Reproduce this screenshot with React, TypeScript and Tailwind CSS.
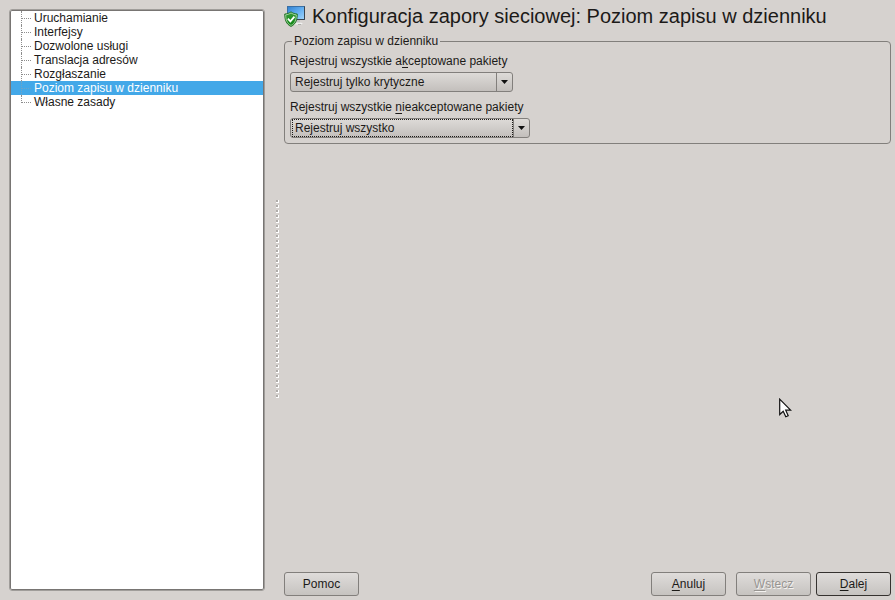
import { useState, type ReactNode } from "react";
import clsx from "clsx";

const SECTIONS = [
  "Uruchamianie",
  "Interfejsy",
  "Dozwolone usługi",
  "Translacja adresów",
  "Rozgłaszanie",
  "Poziom zapisu w dzienniku",
  "Własne zasady",
];

const LOG_LEVELS = ["Rejestruj wszystko", "Rejestruj tylko krytyczne", "Nie rejestruj niczego"];

/** Underlined accelerator letter. */
function Key({ children }: { children: ReactNode }) {
  return <span className="underline decoration-1 underline-offset-2">{children}</span>;
}

function FirewallIcon() {
  return (
    <svg width="22" height="22" viewBox="0 0 22 22" className="shrink-0" aria-hidden="true">
      <defs>
        <linearGradient id="screen" x1="0" y1="0" x2="1" y2="1">
          <stop offset="0" stopColor="#2f7fd0" />
          <stop offset="0.5" stopColor="#62aef0" />
          <stop offset="1" stopColor="#a4d6fb" />
        </linearGradient>
        <linearGradient id="shield" x1="0" y1="0" x2="0" y2="1">
          <stop offset="0" stopColor="#3a9c3a" />
          <stop offset="1" stopColor="#0b8410" />
        </linearGradient>
      </defs>
      <path d="M11 15h5v3h-5z" fill="#c4c4c4" />
      <ellipse cx="14" cy="18.500" rx="4.500" ry="1" fill="#f1f1f1" />
      <path d="M14 19.500h3" stroke="#a5a3a1" strokeWidth="0.800" />
      <rect x="3.500" y="1.500" width="17" height="13" fill="url(#screen)" stroke="#3b6fa3" />
      <path d="M20.500 1.500v13H9" fill="none" stroke="#39444f" />
      <path
        d="M7 6.800c1.800 1.400 3.900 1.900 6.300 2.200 0 5.800-1.300 10-6.300 12.500C2 19 .7 14.800.7 9c2.400-.3 4.500-.8 6.300-2.200z"
        fill="url(#shield)"
        stroke="#1f6b22"
        strokeWidth="0.800"
      />
      <path
        d="M7 8c1.600 1.100 3.300 1.600 5.300 1.900-.1 5-1.200 8.300-5.300 10.500-4.100-2.200-5.200-5.500-5.300-10.500C3.700 9.600 5.400 9.100 7 8z"
        fill="none"
        stroke="#b8dcb6"
        strokeWidth="0.800"
      />
      <path d="M3.900 13.700l2.500 2.700 4-4.700" fill="none" stroke="#fff" strokeWidth="1.800" />
    </svg>
  );
}

type SelectFieldProps = {
  id: string;
  label: ReactNode;
  initial: string;
  autoFocus?: boolean;
  className?: string;
};

function SelectField({ id, label, initial, autoFocus, className }: SelectFieldProps) {
  const [value, setValue] = useState(initial);
  return (
    <div className={clsx("flex flex-col", className)}>
      <label htmlFor={id} className="mb-[3px] h-4 whitespace-nowrap leading-4">
        {label}
      </label>
      <div className="relative grid h-5 rounded-[3px] border border-[#827f7c] bg-linear-to-b from-[#dedbd8] to-[#c3bfbc]">
        <select
          id={id}
          value={value}
          autoFocus={autoFocus}
          onChange={(e) => setValue(e.target.value)}
          className="peer w-full appearance-none bg-transparent pr-4 pl-1 leading-4 outline-none"
        >
          {LOG_LEVELS.map((level) => (
            <option key={level}>{level}</option>
          ))}
        </select>
        <span className="pointer-events-none absolute inset-y-0 right-4 left-px hidden border border-dotted border-[#1c1a18] peer-focus:block" />
        <span className="pointer-events-none absolute inset-y-0 right-0 flex w-4 items-center justify-center border-l border-[#827f7c]">
          <svg width="7" height="4" viewBox="0 0 7 4" aria-hidden="true">
            <path d="M0 0h7L3.500 4z" fill="#111" />
          </svg>
        </span>
      </div>
    </div>
  );
}

function PushButton({
  children,
  isDefault,
  disabled,
}: {
  children: ReactNode;
  isDefault?: boolean;
  disabled?: boolean;
}) {
  return (
    <button
      type="button"
      disabled={disabled}
      className={clsx(
        "h-6 w-[75px] rounded-[3px] border bg-linear-to-b from-[#dfdcda] to-[#c6c3c0] leading-4",
        isDefault ? "border-[#35322f]" : "border-[#827f7c]",
        disabled && "text-[#989592] [text-shadow:1px_1px_0_#f4f2f0]",
      )}
    >
      {children}
    </button>
  );
}

function SectionTree() {
  const [selected, setSelected] = useState(5);
  return (
    <nav className="w-64 shrink-0 rounded-[3px] border border-[#a09d9a] bg-white p-px shadow-[inset_0_0_0_1px_#787573]">
      <ul>
        {SECTIONS.map((name, i) => {
          const isSelected = i === selected;
          const isLast = i === SECTIONS.length - 1;
          const line = isSelected ? "border-[#6fa3c6]" : "border-[#8d8d8d]";
          return (
            <li key={name}>
              <button
                type="button"
                onClick={() => setSelected(i)}
                aria-current={isSelected}
                className={clsx(
                  "flex h-3.5 w-full items-start pl-2.5 leading-3.5",
                  isSelected && "bg-[#43a8e8] text-white",
                )}
              >
                <span
                  className={clsx(
                    "mr-[3px] w-2.5 border-l border-dotted",
                    line,
                    isLast ? "h-2" : "h-3.5",
                  )}
                >
                  <span className={clsx("block h-2 border-b border-dotted", line)} />
                </span>
                {name}
              </button>
            </li>
          );
        })}
      </ul>
    </nav>
  );
}

/** Drag handle between the tree and the form. */
function Splitter() {
  return (
    <div className="flex w-[19px] shrink-0 flex-col items-center justify-center pl-1.5">
      {Array.from({ length: 40 }, (_, i) => (
        <span key={i} className="flex h-[5px] w-[3px] shrink-0">
          <span className="size-[3px] border-r border-b border-white bg-[#b0adaa]" />
        </span>
      ))}
    </div>
  );
}

export default function App() {
  return (
    <div className="relative flex min-h-screen bg-[#d6d2cf] pt-[9px] pr-1 pb-[9px] pl-[9px] font-['Liberation_Sans',Arial,sans-serif] text-[12px] text-[#1c1a18]">
      <SectionTree />
      <Splitter />

      <main className="-mt-1 -mb-[5px] flex min-w-0 flex-1 flex-col">
        <h1 className="flex h-[22px] items-center gap-1.5 text-[20px] leading-[22px] whitespace-nowrap">
          <FirewallIcon />
          Konfiguracja zapory sieciowej: Poziom zapisu w dzienniku
        </h1>

        <fieldset className="mt-1.5 flex flex-col gap-[7px] rounded-[4px] border border-[#827f7c] px-[5px] pt-1 pb-[5px]">
          <legend className="ml-0.5 px-0.5 leading-4">Poziom zapisu w dzienniku</legend>
          <SelectField
            id="accepted"
            label={
              <>
                Rejestruj wszystkie a<Key>k</Key>ceptowane pakiety
              </>
            }
            initial="Rejestruj tylko krytyczne"
            className="w-[223px]"
          />
          <SelectField
            id="rejected"
            label={
              <>
                Rejestruj wszystkie <Key>n</Key>ieakceptowane pakiety
              </>
            }
            initial="Rejestruj wszystko"
            className="w-60"
            autoFocus
          />
        </fieldset>

        <footer className="mt-auto flex items-center">
          <PushButton>Pomoc</PushButton>
          <div className="ml-auto flex gap-[5px]">
            <PushButton>
              <Key>A</Key>nuluj
            </PushButton>
            <span className="ml-[5px]">
              <PushButton disabled>
                <Key>W</Key>stecz
              </PushButton>
            </span>
            <PushButton isDefault>
              <Key>D</Key>alej
            </PushButton>
          </div>
        </footer>
      </main>

      {/* mouse pointer */}
      <svg
        width="13"
        height="20"
        viewBox="0 0 13 20"
        className="pointer-events-none absolute top-[398px] left-[779px]"
        aria-hidden="true"
      >
        <path
          d="M.7 1.200v15.300l3.500-3.300 2.600 5.600 2.400-1.100-2.500-5.500h4.900z"
          fill="#fff"
          stroke="#111"
          strokeWidth="1.200"
        />
      </svg>
    </div>
  );
}
